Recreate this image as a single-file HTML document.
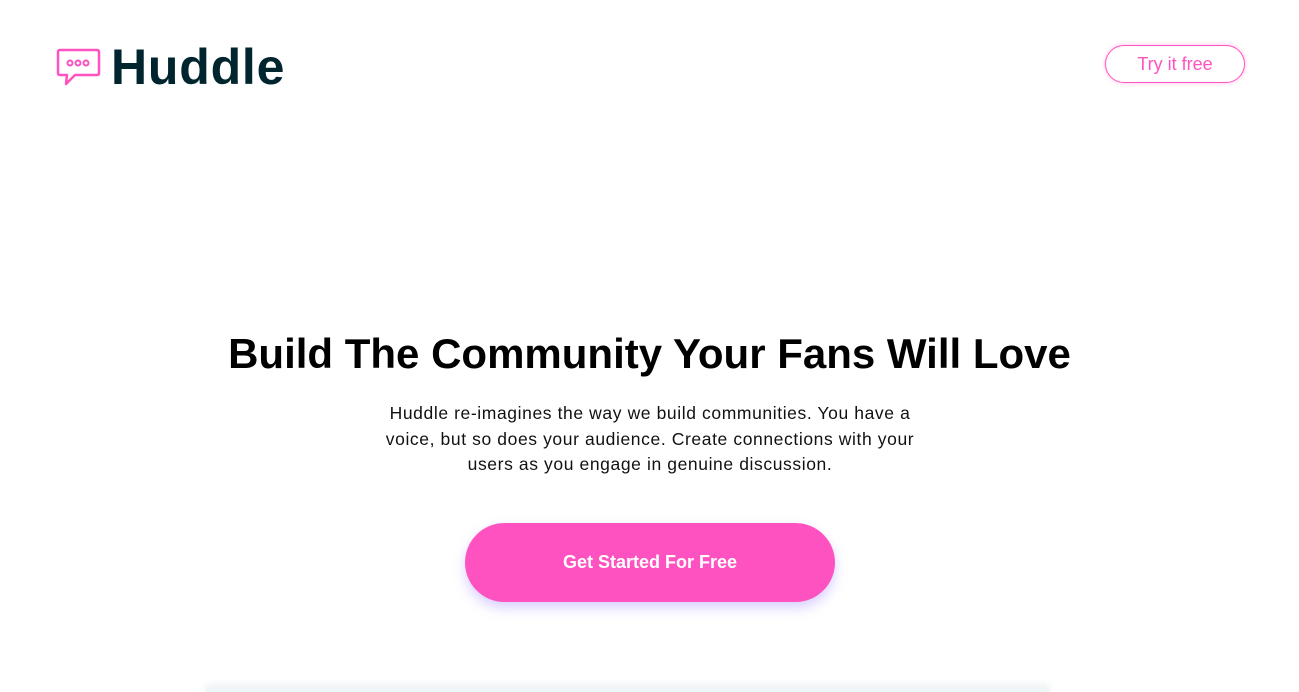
<!DOCTYPE html>
<html><head><meta charset="utf-8"><style>
html,body{margin:0;width:1299px;height:692px;overflow:hidden;background:#fff;font-family:"Liberation Sans",sans-serif;position:relative}
.logo{position:absolute;left:55px;top:38px;display:flex;align-items:center}
.logo span{font-weight:bold;font-size:50px;color:#00252e;margin-left:10px;letter-spacing:0.8px}
.try{position:absolute;left:1105px;top:45px;width:138px;height:36px;border:1.5px solid #ff52c1;border-radius:20px;box-shadow:0 0 4px rgba(255,82,193,.4);color:#ff52c1;font-size:18px;text-align:center;line-height:36px}
h1{position:absolute;top:328px;left:0;width:1299px;text-align:center;margin:0;font-size:42px;font-weight:bold;color:#000;line-height:52px;letter-spacing:0px}
p{position:absolute;top:401px;left:300px;width:700px;text-align:center;margin:0;font-size:17.5px;line-height:25.5px;color:#111;letter-spacing:0.6px}
.btn{position:absolute;left:465px;top:523px;width:370px;height:79px;border-radius:40px;background:#ff52c1;box-shadow:0 6px 12px rgba(150,120,255,.35);color:#fff;font-weight:bold;font-size:18px;text-align:center;line-height:79px}
.card{position:absolute;left:205px;top:688px;width:845px;height:4px;background:#eef6f8;box-shadow:0 -2px 8px rgba(0,80,100,.15);border-radius:8px 8px 0 0}
</style></head><body>
<div class="logo"><svg width="46" height="40" viewBox="0 0 46 40"><path d="M5 3 H42 Q44 3 44 5 V26 Q44 28 42 28 H20 L11 37 L12 28 H5 Q3 28 3 26 V5 Q3 3 5 3Z" fill="none" stroke="#ff52c1" stroke-width="2.5" stroke-linejoin="round"/><circle cx="15" cy="16" r="2.5" fill="none" stroke="#ff52c1" stroke-width="2"/><circle cx="23" cy="16" r="2.5" fill="none" stroke="#ff52c1" stroke-width="2"/><circle cx="31" cy="16" r="2.5" fill="none" stroke="#ff52c1" stroke-width="2"/></svg><span>Huddle</span></div>
<div class="try">Try it free</div>
<h1>Build The Community Your Fans Will Love</h1>
<p>Huddle re-imagines the way we build communities. You have a<br>voice, but so does your audience. Create connections with your<br>users as you engage in genuine discussion.</p>
<div class="btn">Get Started For Free</div>
<div class="card"></div>
</body></html>
